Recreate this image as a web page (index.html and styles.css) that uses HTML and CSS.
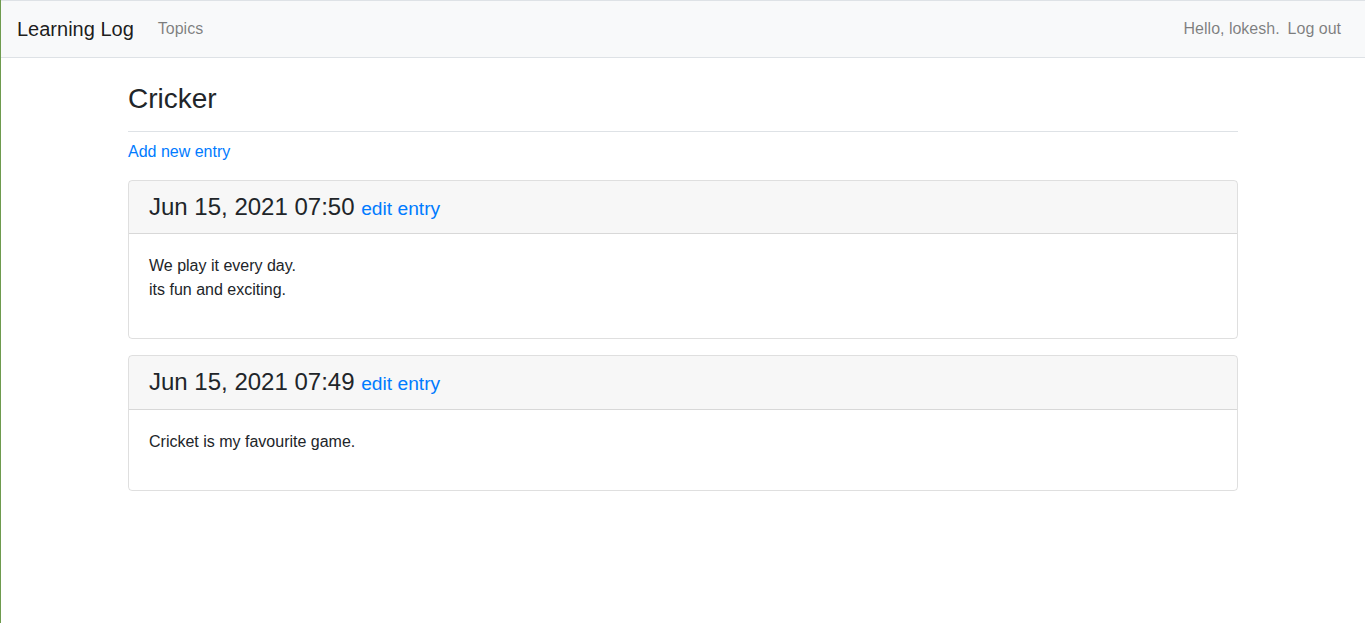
FILE: index.html
```html
<!DOCTYPE html>
<html lang="en">
<head>
<meta charset="utf-8">
<title>Learning Log</title>
<link rel="stylesheet" href="styles.css">
</head>
<body>
<nav class="navbar">
  <div class="nav-left">
    <a class="brand" href="#">Learning Log</a>
    <a class="nav-link" href="#">Topics</a>
  </div>
  <div class="nav-right">
    <span class="nav-text">Hello, lokesh.</span>
    <a class="nav-link" href="#">Log out</a>
  </div>
</nav>
<main class="container">
  <div class="page-header">
    <h3 class="title">Cricker</h3>
  </div>
  <p class="add"><a href="#">Add new entry</a></p>

  <div class="card">
    <div class="card-header">
      <h4 class="entry-date">Jun 15, 2021 07:50 <small><a href="#">edit entry</a></small></h4>
    </div>
    <div class="card-body">
      <p>We play it every day.<br>its fun and exciting.</p>
    </div>
  </div>

  <div class="card">
    <div class="card-header">
      <h4 class="entry-date">Jun 15, 2021 07:49 <small><a href="#">edit entry</a></small></h4>
    </div>
    <div class="card-body">
      <p>Cricket is my favourite game.</p>
    </div>
  </div>
</main>
</body>
</html>
```
FILE: styles.css
```css
* { box-sizing: border-box; }
html, body { height: 100%; }
body {
  margin: 0;
  font-family: "Liberation Sans", Arial, sans-serif;
  font-size: 16px;
  line-height: 1.5;
  color: #212529;
  background: #fff;
  border-left: 1px solid #6e9b4e;
}
a { color: #007bff; text-decoration: none; }

.navbar {
  display: flex;
  justify-content: space-between;
  align-items: center;
  padding: 8px 16px;
  background: #f8f9fa;
  border-top: 1px solid #dee2e6;
  border-bottom: 1px solid #dee2e6;
  margin-bottom: 24px;
}
.nav-left, .nav-right { display: flex; align-items: center; }
.brand {
  font-size: 20px;
  line-height: 30px;
  padding: 5px 0;
  margin-right: 16px;
  color: rgba(0,0,0,.9);
}
.nav-link {
  padding: 8px;
  color: rgba(0,0,0,.5);
}
.nav-text {
  padding: 8px 0;
  color: rgba(0,0,0,.5);
}

.container {
  max-width: 1140px;
  margin: 0 auto;
  padding: 0 15px;
}
.page-header {
  padding-bottom: 7px;
  margin-bottom: 8px;
  border-bottom: 1px solid #dee2e6;
}
.title {
  margin: 0 0 8px;
  font-size: 28px;
  font-weight: 500;
  line-height: 1.2;
}
.add { margin: 0 0 16px; }

.card {
  border: 1px solid rgba(0,0,0,.125);
  border-radius: 4px;
  margin-bottom: 16px;
  overflow: hidden;
}
.card-header {
  padding: 12px 20px;
  background: rgba(0,0,0,.03);
  border-bottom: 1px solid rgba(0,0,0,.125);
}
.entry-date {
  margin: 0;
  font-size: 24px;
  font-weight: 500;
  line-height: 1.2;
}
.entry-date small { font-size: 80%; font-weight: 400; }
.card-body { padding: 20px; }
.card-body p { margin: 0 0 16px; }
```
